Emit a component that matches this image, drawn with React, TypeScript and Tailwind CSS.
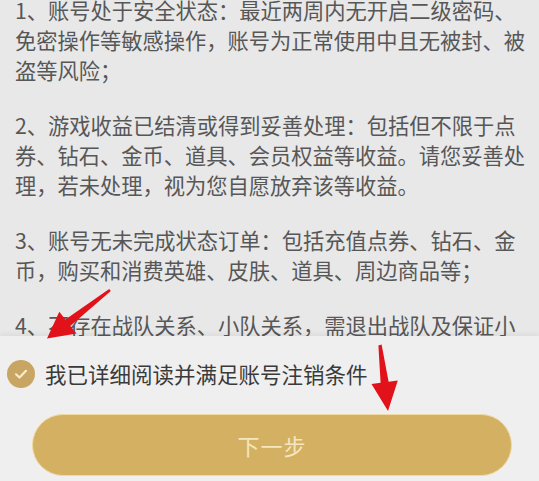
import React from "react";

const paras: string[] = [
  "1、账号处于安全状态：最近两周内无开启二级密码、免密操作等敏感操作，账号为正常使用中且无被封、被盗等风险；",
  "2、游戏收益已结清或得到妥善处理：包括但不限于点券、钻石、金币、道具、会员权益等收益。请您妥善处理，若未处理，视为您自愿放弃该等收益。",
  "3、账号无未完成状态订单：包括充值点券、钻石、金币，购买和消费英雄、皮肤、道具、周边商品等；",
  "4、不存在战队关系、小队关系，需退出战队及保证小",
];

export default function App() {
  return (
    <div className="relative w-[539px] h-[481px] overflow-hidden bg-[#e8e8e8] flex flex-col font-['Noto_Sans_CJK_SC','Noto_Sans',sans-serif]">
      <div className="h-[336px] shrink-0 overflow-hidden pl-[15px]">
        <div className="-mt-[5px] w-[512px] flex flex-col gap-[25px] text-[21.25px] leading-[30px] text-[#575757]">
          {paras.map((p, i) => (
            <p key={i}>{p}</p>
          ))}
        </div>
      </div>
      <div className="relative flex-1 bg-[#efefef] shadow-[0_-2px_5px_rgba(0,0,0,0.06)] flex flex-col">
        <div className="flex items-center gap-[10px] pl-[7px] pt-[24px]">
          <div className="w-[28px] h-[28px] rounded-full bg-[#c9a563] flex items-center justify-center">
            <svg width="16" height="16" viewBox="0 0 16 16" fill="none">
              <path d="M3 8.3 L6.5 11.5 L13 4.8" stroke="#f7ecd2" strokeWidth="2.2" strokeLinecap="round" strokeLinejoin="round" />
            </svg>
          </div>
          <span className="text-[21.5px] leading-[28px] text-[#3a3a3a]">我已详细阅读并满足账号注销条件</span>
        </div>
        <div className="mt-[26px] ml-[32px] w-[480px] h-[62px] rounded-full bg-[#d3b062] border border-[#efd9a4] flex items-center justify-center">
          <span className="text-[22px] text-[#f4e6be] tracking-[1px]">下一步</span>
        </div>
      </div>
      <svg className="absolute inset-0 pointer-events-none" width="539" height="481" viewBox="0 0 539 481">
        <polygon
          points="110.8,291 70.3,325.9 76.5,333.5 47,338.5 59.3,311.8 65.4,319.5 109.2,289"
          fill="#e2121a"
        />
        <polygon
          points="381.6,344.5 388.6,381.7 397.8,380.4 388,411 371.5,384 380.6,382.7 378.4,345.5"
          fill="#e2121a"
        />
      </svg>
    </div>
  );
}
